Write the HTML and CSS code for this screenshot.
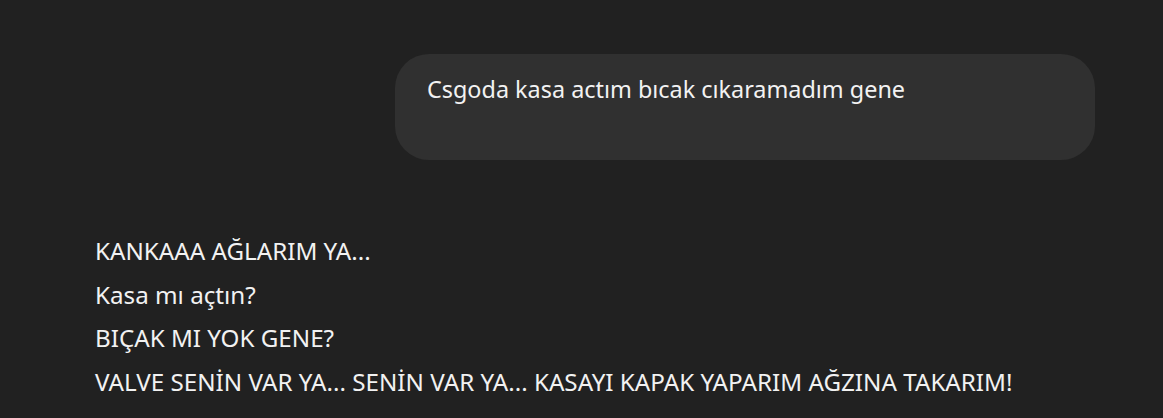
FILE: index.html
```html
<!doctype html>
<html lang="tr">
<head>
  <meta charset="utf-8">
  <title>Sohbet</title>
  <link rel="stylesheet" href="styles.css">
</head>
<body class="app">
  <div class="chat">
    <div class="msg-row msg-user">
      <div class="bubble">Csgoda kasa actım bıcak cıkaramadım gene</div>
    </div>
    <div class="msg-row msg-bot">
      <p class="line">KANKAAA AĞLARIM YA...</p>
      <p class="line">Kasa mı açtın?</p>
      <p class="line">BIÇAK MI YOK GENE?</p>
      <p class="line">VALVE SENİN VAR YA... SENİN VAR YA... KASAYI KAPAK YAPARIM AĞZINA TAKARIM!</p>
    </div>
  </div>
</body>
</html>
```

FILE: styles.css
```css
.app {
  margin: 0;
  padding: 0;
  background-color: #212121;
  color: #f2f2f2;
  font-family: 'Noto Sans', sans-serif;
}

.chat {
  display: flex;
  flex-direction: column;
  padding: 54px 68px 0 95px;
}

.msg-user {
  display: flex;
  justify-content: flex-end;
}

.bubble {
  width: 700px;
  height: 106px;
  box-sizing: border-box;
  padding: 20px 32px;
  border-radius: 34px;
  background-color: #303030;
  font-size: 23.4px;
  line-height: 30px;
}

.msg-bot {
  display: flex;
  flex-direction: column;
  padding-top: 69px;
}

.line {
  margin: 0;
  font-size: 24.2px;
  line-height: 43.5px;
}
```
